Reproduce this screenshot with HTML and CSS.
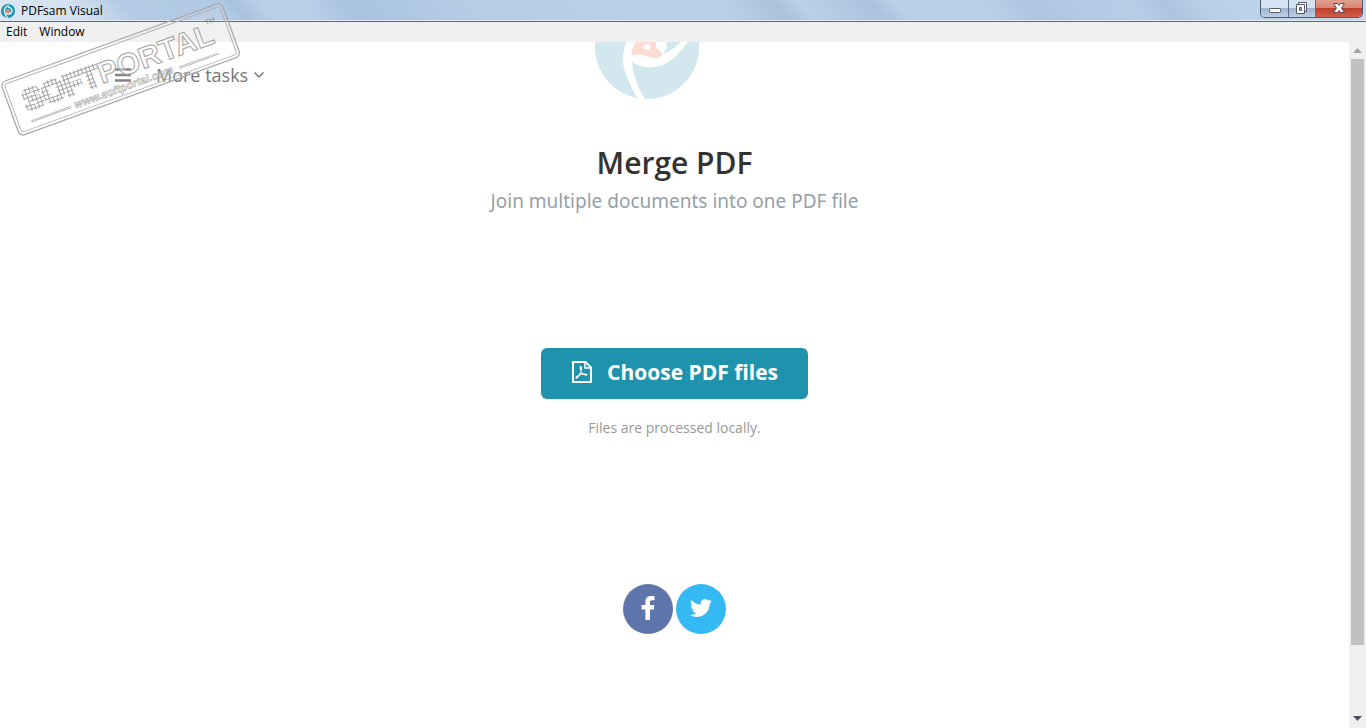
FILE: index.html
```
<!DOCTYPE html>
<html lang="en">
<head>
  <meta charset="utf-8">
  <title>PDFsam Visual</title>
  <meta name="viewport" content="width=device-width, initial-scale=1.0">
  <link rel="stylesheet" href="styles.css">
</head>
<body>

  <header class="titlebar">
    <svg class="app-icon" viewBox="0 0 16 16" aria-hidden="true">
      <circle cx="8" cy="8" r="7" fill="#1f93ad"/>
      <path d="M9 2.500C5.500 3 4 6 4.500 9c.5 2.500 1.500 4 3 5.800" fill="none" stroke="#fff" stroke-width="1.200"/>
      <path d="M8 4.500c2.500-.5 4.200 1.500 4 4-.2 2-3 3.500-7 2.200" fill="none" stroke="#fff" stroke-width="1.200"/>
      <path d="M6 9.800c0-2 .8-3.300 2-3.300s1 2 2.300 3C9.500 10.800 7.500 9.500 6 9.800z" fill="#f26b4e" stroke="#fff" stroke-width=".5"/>
    </svg>
    <span class="app-name">PDFsam Visual</span>
    <div class="window-buttons">
      <button class="win-btn minimize" aria-label="Minimize">
        <svg width="14" height="16" viewBox="0 0 14 16"><rect x="1.500" y="8.500" width="11" height="4" rx="1" fill="#fff" stroke="#555a6b"/></svg>
      </button>
      <button class="win-btn restore" aria-label="Restore">
        <svg width="14" height="16" viewBox="0 0 14 16"><path d="M3.500 2.500h8v9h-8z" fill="#fff" stroke="#555a6b"/><path d="M1.500 4.500h8v9h-8z" fill="#fff" stroke="#555a6b"/><path d="M4.500 7.500h2v3h-2z" fill="#9fb4cc" stroke="#555a6b"/></svg>
      </button>
      <button class="win-btn close" aria-label="Close">
        <svg width="14" height="16" viewBox="0 0 14 16"><path d="M1.500 3.500h4L7 5.500l1.500-2h4L9.500 8l3 4.500h-4l-1.500-2-1.500 2h-4l3-4.500z" fill="#fff" stroke="#5b4a55"/></svg>
      </button>
    </div>
  </header>

  <nav class="menubar">
    <a href="#">Edit</a>
    <a href="#">Window</a>
  </nav>

  <div class="window">
    <main class="page">
      <div class="top">
        <div class="tasks">
          <button class="tasks-btn" aria-label="Menu">
            <svg width="16" height="14" viewBox="0 0 16 14"><path d="M0 1.500h16M0 7h16M0 12.500h16" stroke="#777" stroke-width="2.600"/></svg>
          </button>
          <button class="tasks-btn">More tasks
            <svg width="12" height="8" viewBox="0 0 12 8"><path d="M1.500 1.500L6 6l4.500-4.500" fill="none" stroke="#777" stroke-width="1.500"/></svg>
          </button>
        </div>
        <svg class="logo" width="106" height="58" viewBox="0 0 106 58" role="img" aria-label="PDFsam">
          <circle cx="53" cy="5" r="52" fill="#d2e8ee"/>
          <path d="M32.500 0C28 10 28 22 31.500 31c3 9 7 17 13 27h7C46 50 39 34 38 20c10 7 24 7 35 1C80 17 87 9 94 0h-7C82 5 76 9 69 12c3-4 4-8 3.500-12z" fill="#fff"/>
          <path d="M41.500 0h21c-1 4 0 7 2 8 2 1 4 3 4 5-3 4-8 3.500-12 2.500-6-2-10-5-19-1 0-6 1-10 4-14.500z" fill="#fcdcd3"/>
          <circle cx="53" cy="5" r="3" fill="#fff"/>
        </svg>
      </div>

      <h1>Merge PDF</h1>
      <p class="lead">Join multiple documents into one PDF file</p>

      <button class="choose">
        <svg width="22" height="24" viewBox="0 0 22 24" fill="none" stroke="#fff" stroke-width="2">
          <path d="M2 2h12.500l5.500 5.500V22H2z" stroke-linejoin="round"/>
          <path d="M14 2v6h6" stroke-width="1.500"/>
          <path d="M9.500 6.500c1.500 0 1 4-.2 6.500-1.300 2.700-3 5.200-4.100 5.200-1.200-.8 2-3.200 5.300-3.900 3.300-.6 5.700-.3 5.300.6-.7.900-3.600-.4-5-2.400C9.500 10.500 8.500 6.500 9.500 6.500z" stroke-width="1.100"/>
        </svg>
        <span>Choose PDF files</span>
      </button>
      <p class="note">Files are processed locally.</p>

      <div class="social">
        <a class="facebook" href="#" aria-label="Facebook">
          <svg width="26" height="26" viewBox="0 0 26 26"><path d="M19.500 1.300v3.900h-2.400c-1.800 0-2.100.9-2.100 2.100v2.800h4.400l-.6 4.300H15V25h-4.600V14.400H6.600v-4.300h3.800V6.800C10.400 3.100 12.700 1 16.100 1c1.600 0 3 .1 3.400.3z" fill="#fff"/></svg>
        </a>
        <a class="twitter" href="#" aria-label="Twitter">
          <svg width="22" height="22" viewBox="0 0 24 24"><path d="M23.950 4.570a10 10 0 0 1-2.820.77 4.960 4.960 0 0 0 2.160-2.720c-.95.550-2 .950-3.130 1.190a4.920 4.920 0 0 0-8.380 4.480C7.690 8.090 4.070 6.130 1.640 3.160a4.920 4.920 0 0 0 1.520 6.570 4.900 4.900 0 0 1-2.230-.61v.06c0 2.390 1.700 4.380 3.950 4.830a5 5 0 0 1-2.210.08 4.940 4.940 0 0 0 4.600 3.420A9.870 9.870 0 0 1 0 19.540a13.990 13.990 0 0 0 7.550 2.210c9.050 0 13.990-7.500 13.990-13.980 0-.21 0-.42-.01-.63a9.940 9.940 0 0 0 2.420-2.570z" fill="#fff"/></svg>
        </a>
      </div>
    </main>

    <div class="scrollbar">
      <svg width="9" height="5" viewBox="0 0 9 5"><path d="M0 5l4.500-5L9 5z" fill="#a3a3a3"/></svg>
      <div class="thumb"></div>
      <svg width="9" height="5" viewBox="0 0 9 5"><path d="M0 0l4.500 5L9 0z" fill="#505060"/></svg>
    </div>
  </div>

  <svg class="stamp" width="244" height="140" viewBox="0 0 244 140" aria-hidden="true">
    <defs>
      <pattern id="cells" width="4" height="4" patternUnits="userSpaceOnUse">
        <rect width="4" height="4" fill="#fff"/>
        <path d="M0 3.500h4M3.500 0v4" stroke="#a2a2a2"/>
      </pattern>
    </defs>
    <g transform="translate(120 69) rotate(-20)">
      <rect x="-117" y="-28" width="235" height="57" rx="5" fill="#fff" fill-opacity="0.1" stroke="#aaa" stroke-width="1.300"/>
      <rect x="-114" y="-25" width="229" height="51" rx="3" fill="none" stroke="#b4b4b4" stroke-width="1"/>
      <text class="stamp-word stamp-cells" x="-102" y="8" fill="url(#cells)">SOFT</text>
      <text class="stamp-word" x="-22" y="8" fill="#fff" fill-opacity="0.4" stroke="#a4a4a4">PORTAL</text>
      <text class="stamp-tm" x="96" y="-12">TM</text>
      <text class="stamp-url" x="-55" y="22">www.softportal.com</text>
      <path d="M-101 19h42M56 19h42" stroke="#999" stroke-width="2"/>
      <path d="M-101 19h42M56 19h42" stroke="#eee" stroke-width="1"/>
    </g>
  </svg>

</body>
</html>
```
FILE: styles.css
```
* {
  box-sizing: border-box;
}

body {
  margin: 0;
  min-height: 100vh;
  display: flex;
  flex-direction: column;
  background-color: #fff;
  font-family: "Open Sans", "Noto Sans", sans-serif;
}

button {
  font-family: inherit;
  border: none;
  background: none;
  padding: 0;
  cursor: pointer;
}

svg {
  display: block;
}

/* title bar */
.titlebar {
  height: 22px;
  display: flex;
  align-items: center;
  gap: 5px;
  border-bottom: 1px solid #566a80;
  box-shadow: inset 0 -1px 0 #dfeaf6;
  background: linear-gradient(50deg, #dbe7f4 0%, #d3e1f0 6%, #b3cbe5 10%, #b0c9e4 17%, #a9c2de 18%, #b9d0e9 20%, #b9d0e9 23%, #a9c3e0 26%, #b4cce6 34%, #b9d0e9 46%, #b9d0e9 53%, #abc2dc 57%, #b9d0e9 59%, #abc3de 64%, #b9d0e9 66%, #b9d0e9 72%, #aec6e1 75%, #b6cee8 83%, #acc4df 85%, #b9d0e9 88%, #c5d8eb 100%);
}

.app-icon {
  width: 16px;
  height: 16px;
}

.app-name {
  flex: 1;
  font-size: 12px;
  color: #000;
}

.window-buttons {
  align-self: flex-start;
  display: flex;
  height: 18px;
  margin-right: 3px;
  border: 1px solid #4b5a6d;
  border-top: none;
  border-radius: 0 0 5px 5px;
  overflow: hidden;
}

.win-btn {
  width: 28px;
  display: flex;
  justify-content: center;
  background: linear-gradient(#d5e2ef 50%, #9fb5cf 50%, #bdd0e4);
  border-right: 1px solid #5f7086;
}

.win-btn.restore {
  width: 27px;
}

.win-btn.close {
  width: 46px;
  border: none;
  background: linear-gradient(#e0a090 0%, #d68470 50%, #bd3f28 50%, #d4604a);
}

.menubar {
  height: 20px;
  display: flex;
  align-items: center;
  gap: 12px;
  padding: 0 6px 1px;
  background-color: #f0f0f0;
}

.menubar a {
  font-size: 12px;
  color: #000;
  text-decoration: none;
}

/* page */
.window {
  flex: 1;
  display: flex;
}

.page {
  flex: 1;
  display: flex;
  flex-direction: column;
  align-items: center;
  text-align: center;
}

.top {
  width: 100%;
  display: grid;
  grid-template-columns: 1fr auto 1fr;
}

.tasks {
  display: flex;
  align-items: center;
  gap: 25px;
  padding: 8px 0 0 115px;
}

.tasks-btn {
  display: flex;
  align-items: center;
  gap: 5px;
  font-size: 18px;
  color: #777;
}

.logo {
  margin-right: 56px;
}

h1 {
  margin: 43px 0 0;
  font-size: 30px;
  line-height: 40px;
  font-weight: 600;
  color: #333;
}

.lead {
  margin: 3px 0 0;
  font-family: "Noto Sans", sans-serif;
  font-size: 19px;
  line-height: 30px;
  color: #95a0a8;
}

.choose {
  display: flex;
  align-items: center;
  gap: 14px;
  height: 51px;
  margin-top: 132px;
  padding: 0 30px 3px;
  border-radius: 6px;
  background-color: #1f93ad;
  color: #fff;
  font-size: 21px;
  font-weight: 700;
}

.note {
  margin: 19px 0 0;
  font-size: 14px;
  line-height: 20px;
  color: #999;
}

.social {
  display: flex;
  gap: 3px;
  margin-top: 146px;
}

.social a {
  width: 50px;
  height: 50px;
  display: flex;
  align-items: center;
  justify-content: center;
  padding-bottom: 2px;
  border-radius: 50%;
}

.facebook {
  background-color: #5d75ab;
}

.twitter {
  background-color: #35b9f2;
}

/* scrollbar */
.scrollbar {
  width: 17px;
  display: flex;
  flex-direction: column;
  align-items: center;
  gap: 6px;
  padding: 6px 0 7px;
  background-color: #f0f0f0;
}

.thumb {
  width: 13px;
  height: 87%;
  margin-bottom: auto;
  background-color: #c1c1c1;
}

/* stamp over the corner of the window */
.stamp {
  position: absolute;
  top: 0;
  left: 0;
  pointer-events: none;
}

.stamp-word {
  font-family: "Liberation Sans", Arial, sans-serif;
  font-size: 30px;
  font-weight: bold;
}

.stamp-cells {
  stroke: url(#cells);
  stroke-width: 3px;
}

.stamp-url {
  font-family: "Liberation Sans", Arial, sans-serif;
  font-size: 11px;
  font-style: italic;
  font-weight: bold;
  fill: #fff;
  fill-opacity: 0.4;
  stroke: #aaa;
  stroke-width: 0.6px;
}

.stamp-tm {
  font-family: "Liberation Sans", Arial, sans-serif;
  font-size: 7px;
  fill: #888;
}
```
